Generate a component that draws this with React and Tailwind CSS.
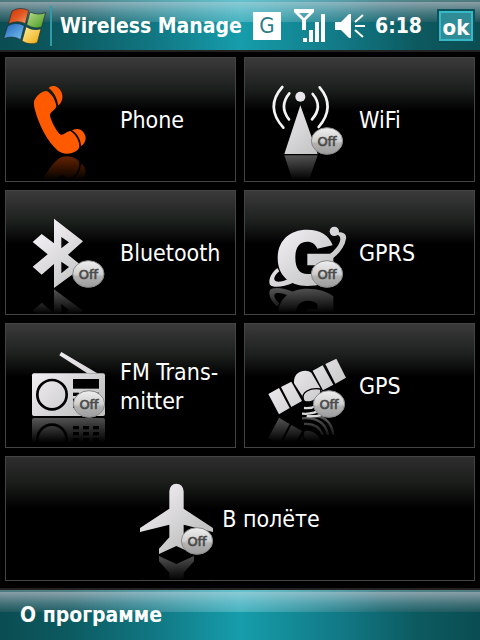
import React, { useId } from "react";

const BAR =
  "bg-[linear-gradient(to_right,#0a4d52_0%,#0c5a60_14%,#117783_32%,#169dac_50%,#148f9c_58%,#117783_72%,#0c5a60_87%,#0a4d52_100%)]";

// glossy strip on the upper part of both bars
function Gloss() {
  return (
    <>
      <div className="absolute inset-x-0 top-0 h-[22px] border-t-2 border-white/20 bg-[linear-gradient(to_bottom,rgba(205,200,210,0.66),rgba(175,180,190,0.36)_55%,rgba(110,120,125,0.2))]" />
      <div className="absolute inset-x-0 top-0 h-[22px] bg-[linear-gradient(to_right,transparent_15%,rgba(130,235,245,0.35)_50%,transparent_80%)]" />
    </>
  );
}

function Badge({ x, y, fill }) {
  return (
    <g>
      <ellipse cx={x} cy={y} rx="47" ry="40" fill={`url(#${fill})`} stroke="#8a8a8a" strokeWidth="3" />
      <text
        x={x}
        y={y + 15}
        textAnchor="middle"
        fontSize="39"
        fill="#4a4a4a"
        stroke="#4a4a4a"
        strokeWidth="2"
        className="font-['DejaVu_Sans',sans-serif]"
      >
        Off
      </text>
    </g>
  );
}

// icon + faded mirror image under it + optional "Off" badge
function TileIcon({ x, y, axis, badge, children }) {
  const id = useId();
  return (
    <svg viewBox={`${x} ${y} 342 369`} className="h-[123px] w-[114px] shrink-0" aria-hidden="true">
      <defs>
        <linearGradient id={`${id}m`} gradientUnits="userSpaceOnUse" x1="0" x2="0" y1={axis} y2={axis + 76}>
          <stop offset="0" stopColor="#fff" stopOpacity="0.42" />
          <stop offset="1" stopColor="#fff" stopOpacity="0" />
        </linearGradient>
        <mask id={`${id}r`} maskUnits="userSpaceOnUse" x={x} y={axis} width="342" height="76">
          <rect x={x} y={axis} width="342" height="76" fill={`url(#${id}m)`} />
        </mask>
        <linearGradient id={`${id}g`} gradientUnits="userSpaceOnUse" x1={x + 95} y1="140" x2={x + 235} y2="290">
          <stop offset="0" stopColor="#f3f0f5" />
          <stop offset="1" stopColor="#c2c2c2" />
        </linearGradient>
        <linearGradient id={`${id}b`} x1="0" x2="0" y1="0" y2="1">
          <stop offset="0" stopColor="#efefef" />
          <stop offset="0.5" stopColor="#cfcfcf" />
          <stop offset="0.6" stopColor="#b2b2b2" />
          <stop offset="1" stopColor="#9c9c9c" />
        </linearGradient>
      </defs>
      <g mask={`url(#${id}r)`}>
        <g transform={`matrix(1 0 0 -1 0 ${axis * 2})`} fill={`url(#${id}g)`}>
          {children}
        </g>
      </g>
      <g fill={`url(#${id}g)`}>{children}</g>
      {badge && <Badge x={badge[0]} y={badge[1]} fill={`${id}b`} />}
    </svg>
  );
}

function PhoneIcon() {
  return (
    <TileIcon x={18} y={18} axis={309}>
      <g fill="#ff5a00">
        <path d="M140 117C125 117 109 130 102 148C101 158 103 166 105 174C116 217 142 268 172 295C185 306 201 307 216 303C229 299 238 292 238 283C238 264 226 246 211 237C200 238 192 249 183 248C170 242 150 200 150 188C152 178 168 174 169 162C166 142 154 124 140 117Z" />
        <path d="M146 108C155 100 166 101 174 107C186 116 190 132 186 143C184 152 178 158 174 160C173 140 161 119 146 108Z" />
        <path d="M216 235C228 229 240 229 247 237C257 247 259 260 255 268C252 276 247 282 243 282C242 262 231 244 216 235Z" />
      </g>
    </TileIcon>
  );
}

function WifiIcon() {
  return (
    <TileIcon x={15} y={18} axis={308} badge={[261, 267]}>
      <circle cx="181" cy="134" r="15" />
      <path d="M181 160L233 306H133Z" />
      <g fill="none" stroke="#f4f4f4" strokeWidth="8" strokeLinecap="round">
        <path d="M127 105Q74 165 130 227" />
        <path d="M148 124Q116 163 147 202" />
        <path d="M218 126Q250 164 216 202" />
        <path d="M239 106Q288 164 236 225" />
      </g>
    </TileIcon>
  );
}

function BluetoothIcon() {
  return (
    <TileIcon x={18} y={15} axis={308} badge={[265, 264]}>
      <path
        fillRule="evenodd"
        d="M162 98L249 166L204 206L249 242L162 306V234L125 266L98 242L143 205L98 168L125 144L162 172ZM184 153V187L207 169ZM184 227V262L207 243Z"
      />
    </TileIcon>
  );
}

function GprsIcon() {
  return (
    <TileIcon x={15} y={15} axis={304} badge={[261, 264]}>
      <path d="M278 178C268 148 240 131 202 131C146 131 113 166 113 216C113 266 146 300 202 300C236 300 262 291 280 277V203H202V238H232V254C224 261 214 264 203 264C178 264 166 246 166 215C166 184 178 167 202 167C216 167 226 174 232 188Z" />
      <circle cx="283" cy="136" r="14" />
      <path d="M290 139C308 137 321 143 318 158C314 182 298 204 272 222L264 208C286 194 300 174 301 160C301 151 297 146 289 147Z" />
      <path d="M112 246C92 262 84 284 90 296C98 306 130 304 160 290L146 278C128 288 108 290 104 283C100 275 108 264 118 256Z" />
    </TileIcon>
  );
}

function RadioIcon() {
  return (
    <TileIcon x={18} y={12} axis={291} badge={[267, 252]}>
      <path d="M184 96L292 160H262L178 106Z" />
      <rect x="96" y="160" width="219" height="128" rx="6" />
      <circle cx="156" cy="224" r="44" fill="none" stroke="#000" strokeWidth="8" />
      <g fill="#000">
        <rect x="219" y="177" width="78" height="29" />
        {[218, 236, 254].map((row) =>
          [219, 249, 279].map((col) => (
            <rect key={`${row}-${col}`} x={col} y={row} width="18" height="10" />
          ))
        )}
      </g>
    </TileIcon>
  );
}

function SatelliteIcon() {
  return (
    <TileIcon x={15} y={12} axis={288} badge={[267, 252]}>
      <path d="M85 222L117 204L149 264L117 283Z" />
      <path d="M123 201L154 185L186 243L154 261Z" />
      <path d="M162 190C161 172 168 160 181 155C193 150 206 151 214 158L246 213L196 242Z" />
      <path d="M218 152L248 136L280 194L249 211Z" />
      <path d="M256 132L289 116L318 173L286 191Z" />
      <path d="M190 238C184 218 208 202 242 207C246 222 226 248 198 246C194 245 191 242 190 238Z" stroke="#000" strokeWidth="4" />
      <g fill="none" stroke="#d8d8d8" strokeWidth="7">
        <path d="M192 264Q234 268 248 232" />
        <path d="M186 281Q252 286 264 232" />
        <path d="M200 288Q272 296 280 232" />
      </g>
    </TileIcon>
  );
}

function PlaneIcon() {
  return (
    <TileIcon x={27} y={21} axis={315} badge={[294, 273]}>
      <path d="M211 124Q213 101 232 101Q252 101 254 124V176L342 234V246L254 224V262L285 296V312L232 288L180 312V296L211 262V224L123 246V234L211 176Z" />
    </TileIcon>
  );
}

function Tile({ icon, children, wide }) {
  return (
    <button
      type="button"
      className={
        wide
          ? "col-span-2 flex items-center justify-center overflow-hidden border border-[#444] bg-[linear-gradient(to_bottom,#2e2e2e,#191c19_22%,#000_42%)] pr-[52px] text-left"
          : "flex items-center overflow-hidden border border-[#444] bg-[linear-gradient(to_bottom,#3a3a3a,#1c201d_25%,#000_43%)] text-left"
      }
    >
      {icon}
      <span className="whitespace-nowrap pt-0.5 text-[23px] leading-[29px] text-white">{children}</span>
    </button>
  );
}

function WindowsFlag() {
  return (
    <svg viewBox="9 18 132 117" className="h-[39px] w-11" aria-hidden="true">
      <defs>
        <linearGradient id="flagRed" x1="0" y1="0" x2="1" y2="1">
          <stop offset="0" stopColor="#c8320c" />
          <stop offset="0.5" stopColor="#e2571f" />
          <stop offset="1" stopColor="#f8a070" />
        </linearGradient>
        <linearGradient id="flagGreen" x1="0" y1="0" x2="1" y2="1">
          <stop offset="0" stopColor="#c0dc90" />
          <stop offset="1" stopColor="#3f9a1c" />
        </linearGradient>
        <linearGradient id="flagBlue" x1="0" y1="0" x2="1" y2="1">
          <stop offset="0" stopColor="#1d62b8" />
          <stop offset="1" stopColor="#7cc4f4" />
        </linearGradient>
        <linearGradient id="flagYellow" x1="0" y1="0" x2="1" y2="1">
          <stop offset="0" stopColor="#fff0a0" />
          <stop offset="1" stopColor="#eda80c" />
        </linearGradient>
      </defs>
      <g stroke="#1c2c30" strokeWidth="2">
        <path fill="url(#flagRed)" d="M36 30Q58 16 86 28L76 68Q52 56 25 69Z" />
        <path fill="url(#flagGreen)" d="M90 33Q112 44 137 35L125 78Q102 86 80 71Z" />
        <path fill="url(#flagBlue)" d="M23 74Q48 61 73 74L62 116Q38 102 11 113Z" />
        <path fill="url(#flagYellow)" d="M78 77Q100 91 123 83L112 125Q88 134 66 120Z" />
      </g>
    </svg>
  );
}

function SignalIcon() {
  return (
    <svg viewBox="0 0 32 34" className="h-[34px] w-8" fill="#fff" role="img" aria-label="Signal">
      <path fillRule="evenodd" d="M0 0H20V3L12 11V21H8V11L0 3ZM5 4L10 9L15 4Z" />
      <rect x="9" y="29" width="4" height="4" />
      <rect x="15" y="21" width="4" height="12" />
      <rect x="21" y="13" width="4" height="20" />
      <rect x="27" y="5" width="4" height="28" />
    </svg>
  );
}

function SpeakerIcon() {
  return (
    <svg viewBox="0 0 30 24" className="h-6 w-[30px]" fill="#fff" role="img" aria-label="Volume">
      <path d="M0 8H6L14 0H16V24H14L6 16H0Z" />
      <path d="M20 8L28 1M20 12H30M20 16L28 23" stroke="#fff" strokeWidth="2" />
    </svg>
  );
}

function TopBar() {
  return (
    <header className={`relative h-[52px] border-b-2 border-[#222] ${BAR}`}>
      <Gloss />
      <div className="relative flex h-full items-center pl-[3px] pr-[5px] pt-0.5">
        <button type="button" aria-label="Start">
          <WindowsFlag />
        </button>
        <div className="ml-[3px] h-10 w-0.5 bg-[#2f9aa8]" />
        <h1 className="ml-2 min-w-0 flex-1 overflow-hidden whitespace-nowrap text-[21px] font-bold leading-7 text-white">
          Wireless Manage
        </h1>
        <div className="flex shrink-0 items-center text-white">
          <span className="flex h-7 w-7 items-center justify-center bg-white text-[22px] leading-7 text-[#2a7d88]">G</span>
          <span className="ml-[13px]">
            <SignalIcon />
          </span>
          <span className="ml-[9px]">
            <SpeakerIcon />
          </span>
          <span className="ml-2.5 w-[52px] whitespace-nowrap text-[21px] font-bold leading-7">6:18</span>
          <button type="button" className="ml-2.5 border-2 border-[#0c5058]">
            <span className="flex h-[30px] w-[34px] items-center justify-center border-2 border-[#35b9c8] bg-[#2f8c97] pt-1 text-[22px] font-bold leading-6">
              ok
            </span>
          </button>
        </div>
      </div>
    </header>
  );
}

export default function App() {
  return (
    <div className="flex min-h-screen flex-col bg-black font-['DejaVu_Sans_Condensed','DejaVu_Sans',sans-serif]">
      <TopBar />

      <main className="grid flex-1 grid-cols-2 grid-rows-4 gap-2 px-[5px] pb-[7px] pt-[5px]">
        <Tile icon={<PhoneIcon />}>Phone</Tile>
        <Tile icon={<WifiIcon />}>WiFi</Tile>
        <Tile icon={<BluetoothIcon />}>Bluetooth</Tile>
        <Tile icon={<GprsIcon />}>GPRS</Tile>
        <Tile icon={<RadioIcon />}>
          FM Trans-
          <br />
          mitter
        </Tile>
        <Tile icon={<SatelliteIcon />}>GPS</Tile>
        <Tile icon={<PlaneIcon />} wide>
          В полёте
        </Tile>
      </main>

      <footer className={`relative h-[52px] border-t-2 border-[#222] ${BAR}`}>
        <Gloss />
        <button type="button" className="relative flex h-full items-center pl-5 text-[21px] font-bold leading-7 text-white">
          О программе
        </button>
      </footer>
    </div>
  );
}
